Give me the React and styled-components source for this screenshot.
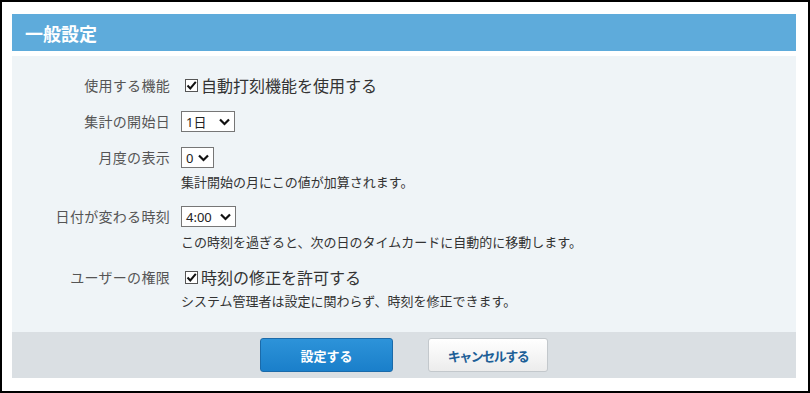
import React from "react";
import styled, { createGlobalStyle } from "styled-components";

const GlobalStyle = createGlobalStyle`
    html, body {
        margin: 0;
        padding: 0;
        background: #fff;
    }
    * {
        box-sizing: border-box;
    }
`;

const Frame = styled.div`
    width: 810px;
    height: 393px;
    border: 2px solid #000;
    padding: 12px 12px 13px 10px;
    display: flex;
    flex-direction: column;
    font-family: "Noto Sans CJK JP", "Noto Sans", "Liberation Sans", sans-serif;
    color: #333;
    background: #fff;
`;

const Header = styled.div`
    height: 37px;
    background-color: #5eabdb;
    color: #fff;
    font-size: 18px;
    font-weight: bold;
    display: flex;
    align-items: center;
    padding-left: 13px;
    margin-bottom: 5px;
`;

const Panel = styled.div`
    background-color: #eff4f7;
    height: 276px;
    padding: 18px 0 0 0;
    display: flex;
    flex-direction: column;
    gap: 15px;
`;

const Row = styled.div`
    display: flex;
    flex-direction: row;
    align-items: flex-start;
`;

const Label = styled.div`
    width: 158px;
    text-align: right;
    font-size: 14px;
    letter-spacing: 0.3px;
    color: #555;
    line-height: ${(p) => p.$lh}px;
    margin-right: 11px;
    white-space: nowrap;
`;

const Field = styled.div`
    display: flex;
    flex-direction: column;
    align-items: flex-start;
`;

const Hint = styled.div`
    font-size: 13px;
    line-height: 18px;
    color: #333;
    margin-top: ${(p) => p.$mt || 5}px;
    white-space: nowrap;
`;

const CheckLine = styled.label`
    display: flex;
    align-items: center;
    height: 22px;
    font-size: 16px;
    color: #333;
    padding-left: 4px;
`;

const CheckBox = styled.span`
    width: 13px;
    height: 13px;
    border: 1px solid #555;
    background: #fff;
    display: inline-flex;
    align-items: center;
    justify-content: center;
    margin-right: 3px;
`;

const SelectBox = styled.div`
    width: ${(p) => p.$w}px;
    height: 21px;
    border: 1px solid #767676;
    background: #fff;
    display: flex;
    align-items: center;
    justify-content: space-between;
    padding: 0 4px 0 4px;
    font-size: 13px;
    color: #222;
    font-family: "Noto Sans", "Noto Sans CJK JP", sans-serif;
`;

const Footer = styled.div`
    height: 46px;
    background-color: #dadfe3;
    display: flex;
    justify-content: center;
    align-items: center;
    gap: 35px;
`;

const Button = styled.button`
    height: 34px;
    width: ${(p) => p.$w}px;
    border-radius: 3px;
    font-family: "Noto Sans CJK JP", sans-serif;
    font-size: 13px;
    font-weight: bold;
    letter-spacing: ${(p) => p.$ls || 0}px;
    cursor: pointer;
    border: 1px solid ${(p) => (p.$primary ? "#1b6aa9" : "#c3c8cc")};
    color: ${(p) => (p.$primary ? "#fff" : "#1d5f97")};
    background: ${(p) =>
        p.$primary
            ? "linear-gradient(#2d93d9, #1a7fca)"
            : "linear-gradient(#ffffff, #ececec)"};
`;

const Chevron = () => (
    <svg width="11" height="8" viewBox="0 0 11 8">
        <path d="M1 1.5 L5.5 6 L10 1.5" fill="none" stroke="#111" strokeWidth="2.2" />
    </svg>
);

const Check = () => (
    <svg width="11" height="11" viewBox="0 0 11 11">
        <path d="M1.5 5.5 L4.3 8.5 L9.8 1.8" fill="none" stroke="#111" strokeWidth="2" />
    </svg>
);

const Select = ({ value, width }) => (
    <SelectBox $w={width}>
        <span>{value}</span>
        <Chevron />
    </SelectBox>
);

const App = () => {
    return (
        <>
            <GlobalStyle />
            <Frame>
                <Header>一般設定</Header>
                <Panel>
                    <Row>
                        <Label $lh={22}>使用する機能</Label>
                        <CheckLine>
                            <CheckBox><Check /></CheckBox>
                            自動打刻機能を使用する
                        </CheckLine>
                    </Row>
                    <Row>
                        <Label $lh={21}>集計の開始日</Label>
                        <Select value="1日" width={54} />
                    </Row>
                    <Row>
                        <Label $lh={21}>月度の表示</Label>
                        <Field>
                            <Select value="0" width={33} />
                            <Hint>集計開始の月にこの値が加算されます。</Hint>
                        </Field>
                    </Row>
                    <Row>
                        <Label $lh={21}>日付が変わる時刻</Label>
                        <Field>
                            <Select value="4:00" width={55} />
                            <Hint $mt={6}>この時刻を過ぎると、次の日のタイムカードに自動的に移動します。</Hint>
                        </Field>
                    </Row>
                    <Row>
                        <Label $lh={22}>ユーザーの権限</Label>
                        <Field>
                            <CheckLine>
                                <CheckBox><Check /></CheckBox>
                                時刻の修正を許可する
                            </CheckLine>
                            <Hint $mt={4}>システム管理者は設定に関わらず、時刻を修正できます。</Hint>
                        </Field>
                    </Row>
                </Panel>
                <Footer>
                    <Button $primary $w={133}>設定する</Button>
                    <Button $w={120} $ls={-1.5}>キャンセルする</Button>
                </Footer>
            </Frame>
        </>
    );
};

export default App;
